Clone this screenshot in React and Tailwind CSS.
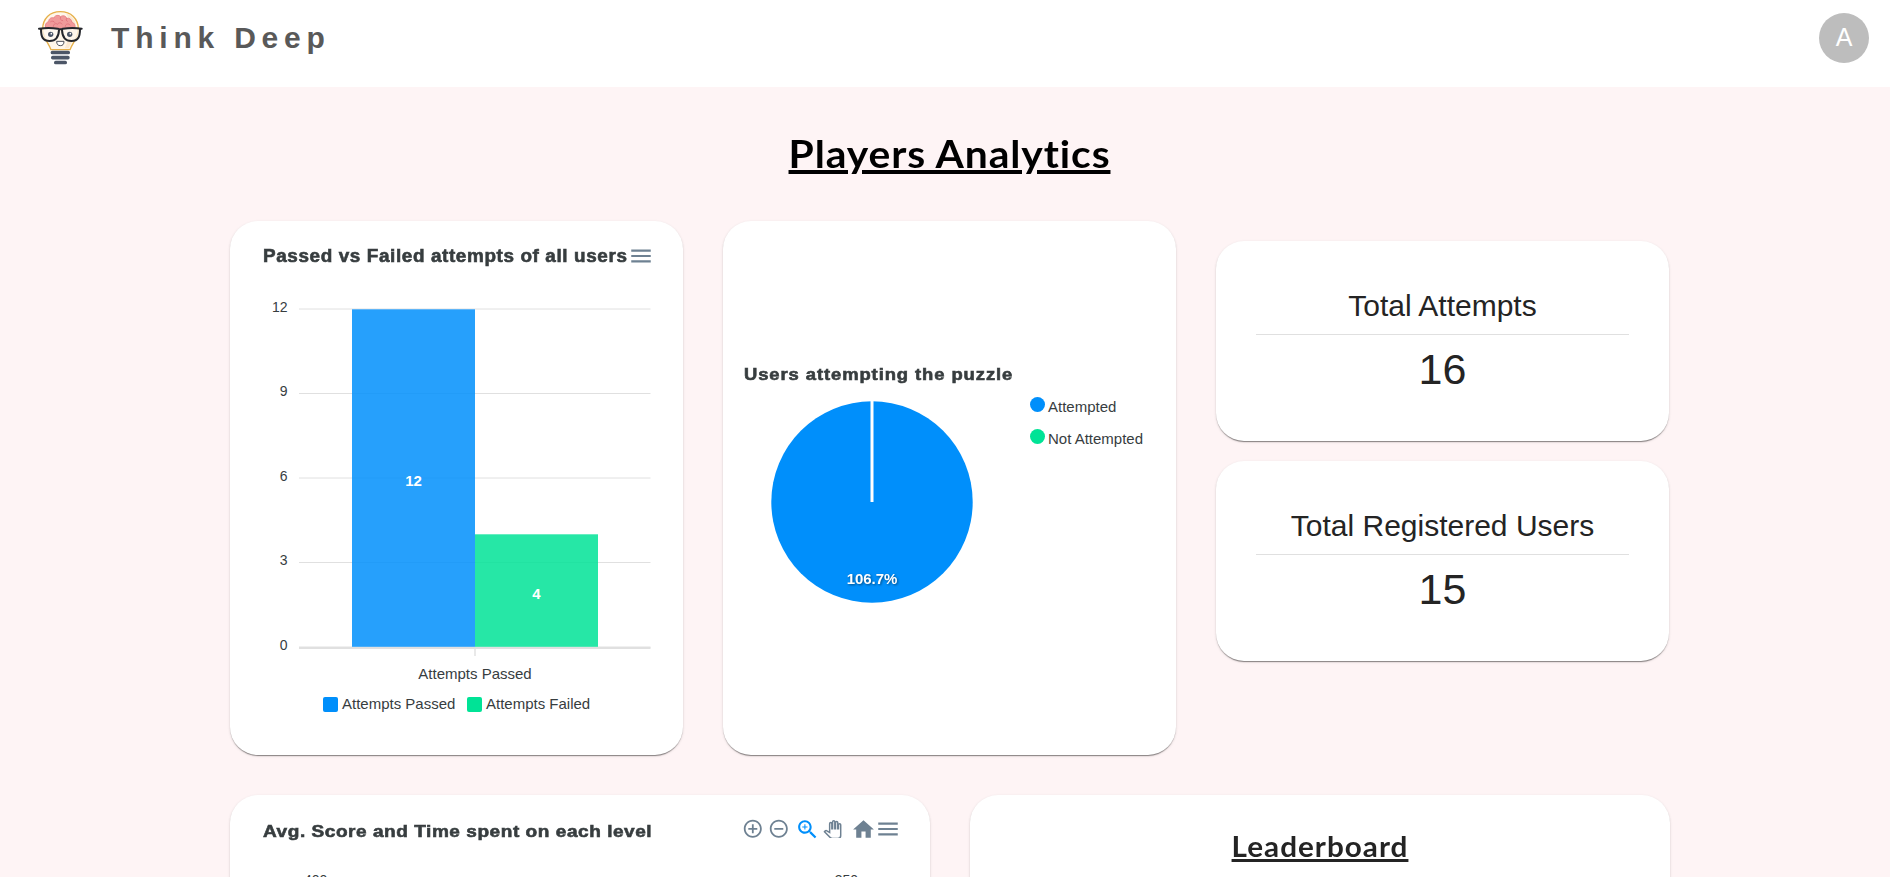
const ARIAL = "font-['Liberation_Sans',Arial,sans-serif]";
const CARD =
  "rounded-[28px] bg-white shadow-[0_2px_1px_-1px_rgba(0,0,0,0.3),0_1px_1px_0_rgba(0,0,0,0.16),0_1px_3px_0_rgba(0,0,0,0.12)]";
const CHART_TITLE =
  "origin-left whitespace-nowrap text-[#373d3f] [-webkit-text-stroke:0.6px_#373d3f]";

function Logo() {
  return (
    <svg className="h-[54px] w-[45px]" viewBox="0 0 135 162" fill="none">
      <path
        d="M67 2C35 2 14 23 14 54c0 26 16 38 25 62h57c9-24 25-36 25-62C121 23 99 2 67 2Z"
        fill="#fff7ea"
        stroke="#e6b04a"
        strokeWidth="4"
      />
      <path d="M84 6c20 8 31 25 31 48 0 24-15 38-23 58H80c16-30 24-70 4-106Z" fill="#fbe9d2" />
      <path
        d="M24 52c-5-10 1-19 8-20 0-9 8-14 15-11 4-9 16-10 21-4 6-5 16-3 18 5 8-2 15 3 15 11 8 2 12 11 9 19Z"
        fill="#f19a9a"
        stroke="#e57b80"
        strokeWidth="2.5"
      />
      <path
        d="M38 32c4-3 10-2 12 2M68 18c-3 6 0 10 6 11M46 46c0-8 8-10 13-6 2-6 10-6 13-1M82 46c0-8 10-10 14-4M86 22c-3 3-2 7 2 9"
        stroke="#e0707a"
        strokeWidth="2.5"
        strokeLinecap="round"
      />
      <path d="M8 55h51v16c0 12-9 20-24 20S10 82 8 69ZM76 55h51l-2 14c-2 13-12 22-27 22S76 83 76 71Z" fill="#fffaf2" fillOpacity="0.75" />
      <path
        d="M3 53q30-4 56 0q8 4 16 0q28-4 56 0M9 55c0 22 5 35 26 35 18 0 27-10 28-33M126 55c0 22-5 35-26 35-18 0-27-10-28-33"
        stroke="#25272c"
        strokeWidth="6"
        strokeLinecap="round"
      />
      <circle cx="38" cy="70" r="8" fill="#4a5566" />
      <circle cx="40" cy="68" r="2.5" fill="#fff" />
      <circle cx="95" cy="70" r="8" fill="#4a5566" />
      <circle cx="97" cy="68" r="2.5" fill="#fff" />
      <path d="M56 91h22c0 9-4 13-11 13s-11-4-11-13Z" fill="#fff" stroke="#4b4f58" strokeWidth="3" strokeLinejoin="round" />
      <rect x="38" y="119" width="58" height="11" rx="5" fill="#4c5667" />
      <rect x="39" y="134.500" width="56" height="11" rx="5" fill="#4c5667" />
      <rect x="48" y="149.500" width="39" height="10.500" rx="5" fill="#4c5667" />
    </svg>
  );
}

function MenuIcon() {
  return (
    <svg className="size-[26px] shrink-0" viewBox="0 0 24 24" fill="#6e8192">
      <path d="M3 18h18v-2H3v2zm0-5h18v-2H3v2zm0-7v2h18V6H3z" />
    </svg>
  );
}

function ChartToolbar() {
  return (
    <div className="flex items-start text-[#6e8192]">
      <svg className="mt-[2px] size-[21.6px]" viewBox="0 0 24 24" fill="currentColor">
        <path d="M13 7h-2v4H7v2h4v4h2v-4h4v-2h-4V7zm-1-5C6.480 2 2 6.480 2 12s4.480 10 10 10 10-4.480 10-10S17.520 2 12 2zm0 18c-4.410 0-8-3.590-8-8s3.590-8 8-8 8 3.590 8 8-3.590 8-8 8z" />
      </svg>
      <svg className="mt-[2px] ml-[3.600px] size-[21.6px]" viewBox="0 0 24 24" fill="currentColor">
        <path d="M7 11v2h10v-2H7zm5-9C6.480 2 2 6.480 2 12s4.480 10 10 10 10-4.480 10-10S17.520 2 12 2zm0 18c-4.410 0-8-3.590-8-8s3.590-8 8-8 8 3.590 8 8-3.590 8-8 8z" />
      </svg>
      <svg className="mt-px ml-[5.600px] size-[25px]" viewBox="0 0 24 24" fill="#008ffb">
        <path d="M15.500 14h-.79l-.28-.27C15.410 12.590 16 11.110 16 9.500 16 5.910 13.090 3 9.500 3S3 5.910 3 9.500 5.910 16 9.500 16c1.610 0 3.090-.59 4.230-1.570l.27.28v.79l5 4.990L20.490 19l-4.990-5zm-6 0C7.010 14 5 11.990 5 9.500S7.010 5 9.500 5 14 7.010 14 9.500 11.990 14 9.500 14z" />
        <path d="M12 10h-2v2H9v-2H7V9h2V7h1v2h2v1z" />
      </svg>
      <svg className="mt-[3.600px] ml-[3.600px] h-[18.500px] w-[19.200px]" viewBox="-1 -1 26 25" fill="#fff" stroke="currentColor" strokeWidth="2">
        <path d="M23 5.500V20c0 2.200-1.800 4-4 4h-7.300c-1.080 0-2.100-.43-2.850-1.190L1 14.830s1.260-1.230 1.300-1.250c.22-.19.49-.29.79-.29.22 0 .42.06.6.16.04.01 4.310 2.460 4.310 2.460V4c0-.83.67-1.500 1.500-1.500S11 3.170 11 4v7h1V1.500c0-.83.67-1.500 1.500-1.500S15 .67 15 1.500V11h1V2.500c0-.83.67-1.500 1.500-1.500s1.500.67 1.500 1.500V11h1V5.500c0-.83.67-1.500 1.500-1.500s1.500.67 1.500 1.500z" />
      </svg>
      <svg className="mt-px ml-[8px] size-[25px]" viewBox="0 0 24 24" fill="currentColor">
        <path d="M10 20v-6h4v6h5v-8h3L12 3 2 12h3v8z" />
      </svg>
      <div className="-ml-[0.500px]">
        <MenuIcon />
      </div>
    </div>
  );
}

function AttemptsChart() {
  const rows = [
    ["12", 8.5],
    ["9", 93],
    ["6", 177.500],
    ["3", 262],
    ["0", 346.500],
  ];
  return (
    <svg className="mt-[31px] block h-[390px] w-[389px]" viewBox="0 0 389 390" fill="#373d3f">
      {rows.map(([label, y]) => (
        <g key={label}>
          <line x1="37" x2="388.500" y1={y + 0.5} y2={y + 0.5} stroke="#e0e0e0" />
          <text x="25.500" y={y + 3} fontSize="14" textAnchor="end">
            {label}
          </text>
        </g>
      ))}
      <line x1="37" x2="388.500" y1="348" y2="348" stroke="#e0e0e0" strokeWidth="2" />
      <line x1="213" x2="213" y1="349" y2="356" stroke="#e9e9e9" strokeWidth="2" />
      <rect x="90" y="9.300" width="123" height="337.500" fill="#008ffb" fillOpacity="0.85" />
      <rect x="213" y="234.300" width="123" height="112.500" fill="#00e396" fillOpacity="0.85" />
      <g fill="#fff" fontSize="15" fontWeight="700" textAnchor="middle">
        <text x="151.500" y="186">12</text>
        <text x="274.500" y="298.700">4</text>
      </g>
      <text x="213" y="378.600" fontSize="15" textAnchor="middle">
        Attempts Passed
      </text>
    </svg>
  );
}

function PieChart() {
  return (
    <svg className="block size-[204px]" viewBox="-102 -102 204 204">
      <circle r="100.700" fill="#008ffb" />
      <line y1="-102" y2="0" stroke="#fff" strokeWidth="3" />
      <text
        className="[filter:drop-shadow(1px_1px_1px_rgba(0,0,0,0.45))]"
        y="81.500"
        fill="#fff"
        fontSize="15"
        fontWeight="700"
        textAnchor="middle"
        textLength="50.500"
      >
        106.7%
      </text>
    </svg>
  );
}

function StatCard({ label, value }) {
  return (
    <div className={`${CARD} flex h-[200px] flex-col items-center px-10 pt-[48px] text-[#242424]`}>
      <div className="text-[30px] leading-[34px]">{label}</div>
      <div className="mt-[11px] h-px w-full bg-[#e0e0e0]" />
      <div className="mt-[10px] text-[43px] leading-[48px]">{value}</div>
    </div>
  );
}

export default function App() {
  return (
    <div className={`${ARIAL} flex h-[877px] flex-col overflow-hidden bg-[#fef4f5]`}>
      <header className="flex h-[87px] shrink-0 items-start bg-white pl-[38px] pr-[21px]">
        <div className="mt-[11px]">
          <Logo />
        </div>
        <div className="mt-[20px] ml-[28px] text-[30px] leading-[36px] font-bold tracking-[5.800px] text-[#595959]">Think Deep</div>
        <div className="mt-[13px] ml-auto flex size-[50px] items-center justify-center rounded-full bg-[#bdbdbd] text-[25px] text-white">
          A
        </div>
      </header>

      <main className="ml-[230px] w-[1439px]">
        <h1 className="mt-[39px] scale-x-[1.06] text-center font-[Lato,sans-serif] text-[38.5px] leading-[54px] font-bold tracking-[0.85px] text-black underline decoration-[4px] underline-offset-[2px]">
          Players Analytics
        </h1>

        <section className="mt-[41px] flex items-start justify-between">
          <div className={`${CARD} flex h-[534px] w-[453px] flex-col px-8 pt-[22px]`}>
            <div className="flex w-[392px] items-center justify-between">
              <h2 className={`${CHART_TITLE} ml-[0.5px] w-[350px] scale-x-[1.05] text-[18px] leading-[26px] font-bold tracking-[0.58px]`}>
                Passed vs Failed attempts of all users
              </h2>
              <MenuIcon />
            </div>
            <AttemptsChart />
            <div className="mt-[4px] ml-[61px] flex items-center text-[15px] leading-[20px] text-[#373d3f]">
              <span className="mr-[4px] size-[15px] rounded-[2px] bg-[#008ffb]" />
              <span className="w-[125px]">Attempts Passed</span>
              <span className="mr-[4px] size-[15px] rounded-[2px] bg-[#00e396]" />
              <span>Attempts Failed</span>
            </div>
          </div>

          <div className={`${CARD} flex h-[534px] w-[453px] flex-col px-5 pt-[142px]`}>
            <h2 className={`${CHART_TITLE} ml-px scale-x-[1.15] text-[16px] leading-[24px] font-black tracking-[0.8px]`}>
              Users attempting the puzzle
            </h2>
            <div className="mt-[13px] flex items-start pl-[27px]">
              <PieChart />
              <div className="-mt-[3px] ml-[56px] flex flex-col gap-3 text-[15px] leading-[20px] text-[#373d3f]">
                <div className="flex items-start gap-[3px]">
                  <span className="size-[15px] rounded-full bg-[#008ffb]" />
                  <span>Attempted</span>
                </div>
                <div className="flex items-start gap-[3px]">
                  <span className="size-[15px] rounded-full bg-[#00e396]" />
                  <span>Not Attempted</span>
                </div>
              </div>
            </div>
          </div>

          <div className="flex w-[453px] flex-col gap-5 pt-5">
            <StatCard label="Total Attempts" value="16" />
            <StatCard label="Total Registered Users" value="15" />
          </div>
        </section>

        <section className="mt-[40px] flex w-[1440px] gap-10">
          <div className={`${CARD} h-[534px] w-[700px] px-8 pt-[21px]`}>
            <div className="-mr-[3px] flex h-[28px] items-start justify-between">
              <h2 className={`${CHART_TITLE} mt-[4px] ml-[0.5px] scale-x-[1.12] text-[17px] leading-[24px] font-black tracking-[0.48px]`}>
                Avg. Score and Time spent on each level
              </h2>
              <ChartToolbar />
            </div>
            <div className="mt-[26px] flex justify-between pr-[8px] pl-[42px] text-[14px] leading-[20px] text-[#373d3f]">
              <span>400</span>
              <span className="mr-[32px]">350</span>
            </div>
          </div>
          <div className={`${CARD} h-[534px] w-[700px] pt-[32px]`}>
            <h2 className="scale-x-[1.06] text-center font-[Lato,sans-serif] text-[28px] leading-[38px] font-bold tracking-[0.95px] text-[#242424] underline decoration-[3px] underline-offset-[2px]">
              Leaderboard
            </h2>
          </div>
        </section>
      </main>
    </div>
  );
}
